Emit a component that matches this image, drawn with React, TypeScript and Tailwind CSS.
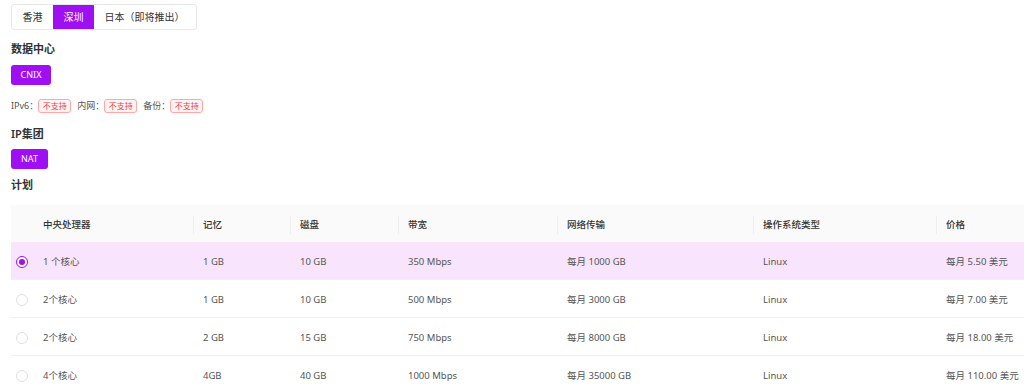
import React, { useState } from 'react';

const plans = [
  { cpu: '1 个核心', mem: '1 GB', disk: '10 GB', bw: '350 Mbps', traffic: '每月 1000 GB', os: 'Linux', price: '每月 5.50 美元' },
  { cpu: '2个核心', mem: '1 GB', disk: '10 GB', bw: '500 Mbps', traffic: '每月 3000 GB', os: 'Linux', price: '每月 7.00 美元' },
  { cpu: '2个核心', mem: '2 GB', disk: '15 GB', bw: '750 Mbps', traffic: '每月 8000 GB', os: 'Linux', price: '每月 18.00 美元' },
  { cpu: '4个核心', mem: '4GB', disk: '40 GB', bw: '1000 Mbps', traffic: '每月 35000 GB', os: 'Linux', price: '每月 110.00 美元' },
];

const headers = ['中央处理器', '记忆', '磁盘', '带宽', '网络传输', '操作系统类型', '价格'];

const cols = 'grid grid-cols-[22px_160px_97px_108px_159px_196px_183px_1fr]';

const Badge = () => (
  <span className="inline-flex h-[14px] items-center rounded-[3px] border border-[#ffa8a8] bg-[#fff2f2] px-[3.5px] text-[8px] leading-none text-[#e5484d]">
    不支持
  </span>
);

const App: React.FC = () => {
  const [region, setRegion] = useState('深圳');
  const [selected, setSelected] = useState(0);

  return (
    <div
      className="h-[391px] w-[1024px] overflow-hidden bg-white pl-[11px] text-[#333]"
      style={{ fontFamily: '"Noto Sans", "Noto Sans CJK SC", sans-serif' }}
    >
      {/* region tabs */}
      <div className="mt-[4px] flex h-[26px] w-[186px] overflow-hidden rounded-[3px] border border-[#e8e8e8]">
        {['香港', '深圳', '日本（即将推出）'].map((r) => (
          <button
            key={r}
            onClick={() => setRegion(r)}
            className={
              'h-full px-[10.5px] text-[10px] leading-none ' +
              (region === r ? 'bg-[#9e0ff2] text-white' : 'text-[#333]')
            }
          >
            {r}
          </button>
        ))}
      </div>

      <div className="mt-[12px] text-[11px] font-semibold leading-[14px]">数据中心</div>
      <button className="mt-[9px] h-[20px] w-[40px] rounded-[3px] bg-[#9e0ff2] text-[9px] text-white">CNIX</button>

      <div className="mt-[14px] flex items-center text-[9px] text-[#555]">
        <span>IPv6：</span>
        <Badge />
        <span className="ml-[6px]">内网：</span>
        <Badge />
        <span className="ml-[6px]">备份：</span>
        <Badge />
      </div>

      <div className="mt-[14px] text-[11px] font-semibold leading-[14px]">IP集团</div>
      <button className="mt-[8px] h-[20px] w-[37px] rounded-[3px] bg-[#9e0ff2] text-[9px] text-white">NAT</button>

      <div className="mt-[9px] text-[11px] font-semibold leading-[14px]">计划</div>

      {/* plans table */}
      <div className="mt-[13px] text-[9.5px]">
        <div className={cols + ' h-[37px] items-center bg-[#fafafa] pt-[3px] font-medium text-[#333]'}>
          <div />
          {headers.map((h, i) => (
            <div key={h} className="relative pl-[10px]">
              {i > 0 && <span className="absolute left-0 top-1/2 h-[18px] w-px -translate-y-1/2 bg-[#eeeeee]" />}
              {h}
            </div>
          ))}
        </div>
        {plans.map((p, i) => (
          <div
            key={i}
            onClick={() => setSelected(i)}
            className={
              cols +
              ' h-[38px] items-center border-b border-[#f0f0f0] pt-[3px] text-[#555] ' +
              (selected === i ? 'bg-[#f8e5fd]' : 'bg-white')
            }
          >
            <div className="flex justify-center">
              {selected === i ? (
                <span className="flex h-[12px] w-[12px] items-center justify-center rounded-full border border-[#9e0ff2] bg-white">
                  <span className="h-[6px] w-[6px] rounded-full bg-[#9e0ff2]" />
                </span>
              ) : (
                <span className="h-[12px] w-[12px] rounded-full border border-[#e0e0e0] bg-white" />
              )}
            </div>
            <div className="pl-[10px]">{p.cpu}</div>
            <div className="pl-[10px]">{p.mem}</div>
            <div className="pl-[10px]">{p.disk}</div>
            <div className="pl-[10px]">{p.bw}</div>
            <div className="pl-[10px]">{p.traffic}</div>
            <div className="pl-[10px]">{p.os}</div>
            <div className="pl-[10px]">{p.price}</div>
          </div>
        ))}
      </div>
    </div>
  );
};

export default App;
